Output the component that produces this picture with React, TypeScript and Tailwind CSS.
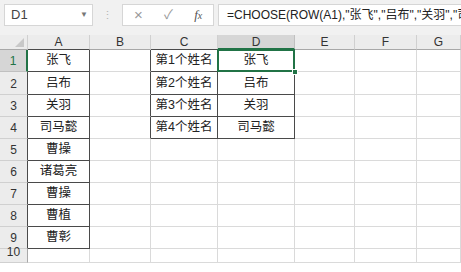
import React from 'react';

const COLS = ['A', 'B', 'C', 'D', 'E', 'F', 'G'];
const NAMES = ['张飞', '吕布', '关羽', '司马懿', '曹操', '诸葛亮', '曹操', '曹植', '曹彰'];

const font = { fontFamily: '"Liberation Sans", "Noto Sans CJK SC", sans-serif' };

function cellClass(row: number, col: string) {
  const inA = col === 'A' && row <= 9;
  const inCD = (col === 'C' || col === 'D') && row <= 4;
  const rightDark = inA || inCD || (col === 'B' && row <= 4);
  const bottomDark = inA || inCD;
  return [
    'border-r border-b flex items-center justify-center text-[12.5px] text-[#222] whitespace-nowrap overflow-hidden',
    rightDark ? 'border-r-[#4a4a4a]' : 'border-r-[#dadada]',
    bottomDark ? 'border-b-[#4a4a4a]' : 'border-b-[#dadada]',
  ].join(' ');
}

function cellText(row: number, col: string) {
  if (col === 'A') return NAMES[row - 1] ?? '';
  if (col === 'C' && row <= 4) return `第${row}个姓名`;
  if (col === 'D' && row <= 4) return NAMES[row - 1];
  return '';
}

export default function App() {
  const rows = [1, 2, 3, 4, 5, 6, 7, 8, 9, 10];
  const rowH = (r: number) => (r === 10 ? 'h-[14px]' : r === 2 ? 'h-[23px]' : 'h-[22px]');

  return (
    <div className="w-[461px] h-[272px] bg-white overflow-hidden" style={font}>
      {/* formula bar */}
      <div className="h-[35px] bg-[#f1f1f1] flex items-start pt-[4px] pl-[4px]">
        <div className="w-[89px] h-[22px] bg-white border border-[#d6d6d6] flex items-center pl-[6px] pr-[4px] text-[13px] text-[#444]">
          <span className="flex-1">D1</span>
          <span className="text-[8px] text-[#777]">▼</span>
        </div>
        <div className="w-[29px] h-[22px] flex items-center justify-center text-[#b5b5b5] text-[11px] leading-none">⋮</div>
        <div className="w-[92px] h-[22px] bg-white border border-[#d6d6d6] flex items-center text-[#9a9a9a]">
          <span className="w-[31px] text-center text-[15px]">×</span>
          <span className="w-[30px] text-center text-[13px]">✓</span>
          <span className="w-[30px] text-center text-[13px] italic text-[#555]" style={{ fontFamily: '"Liberation Serif", serif' }}>
            f<span className="text-[10px]">x</span>
          </span>
        </div>
        <div className="flex-1 ml-[4px] h-[22px] bg-white border border-[#d6d6d6] border-r-0 flex items-center pl-[8px] text-[12px] text-[#222] whitespace-nowrap overflow-hidden">
          =CHOOSE(ROW(A1),"张飞","吕布","关羽","司马懿","曹操")
        </div>
      </div>

      {/* grid */}
      <div className="grid grid-cols-[28px_62px_61px_67px_77px_60px_62px_1fr]">
        <div className="h-[15px] bg-[#ececec] border-r border-b border-r-[#d0d0d0] border-b-[#a8a8a8] relative">
          <div className="absolute right-[3px] bottom-[2px] w-0 h-0 border-l-[9px] border-l-transparent border-b-[9px] border-b-[#c8c8c8]" />
        </div>
        {COLS.map((c) => (
          <div
            key={c}
            className={
              c === 'D'
                ? 'h-[15px] bg-[#d6d6d6] border-r border-r-[#c0c0c0] border-b-2 border-b-[#217346] flex items-center justify-center text-[12px] text-[#333]'
                : `h-[15px] bg-[#ececec] border-r border-r-[#d0d0d0] border-b ${c === 'A' || c === 'C' ? 'border-b-[#4a4a4a]' : 'border-b-[#a8a8a8]'} flex items-center justify-center text-[12px] text-[#333]`
            }
          >
            {c}
          </div>
        ))}

        {rows.map((r) => (
          <React.Fragment key={r}>
            <div
              className={`${rowH(r)} border-b border-r flex items-end justify-center pb-[1px] text-[12px] ${
                r === 1
                  ? 'bg-[#d6d6d6] border-r-2 border-r-[#217346] border-b-[#c0c0c0] text-[#217346]'
                  : `bg-[#ececec] border-b-[#d0d0d0] text-[#333] ${r <= 9 ? 'border-r-[#4a4a4a]' : 'border-r-[#a8a8a8]'}`
              }`}
            >
              {r}
            </div>
            {COLS.map((c) => (
              <div key={c} className={`${rowH(r)} ${cellClass(r, c)} ${c === 'D' && r === 1 ? 'relative overflow-visible' : ''}`}>
                {cellText(r, c)}
                {c === 'D' && r === 1 && (
                  <>
                    <div className="absolute -left-[1px] -top-[1px] -right-[1px] -bottom-[1px] border-2 border-[#217346] pointer-events-none" />
                    <div className="absolute -right-[4px] -bottom-[4px] w-[6px] h-[6px] bg-[#217346] border border-white" />
                  </>
                )}
              </div>
            ))}
          </React.Fragment>
        ))}
      </div>
    </div>
  );
}
